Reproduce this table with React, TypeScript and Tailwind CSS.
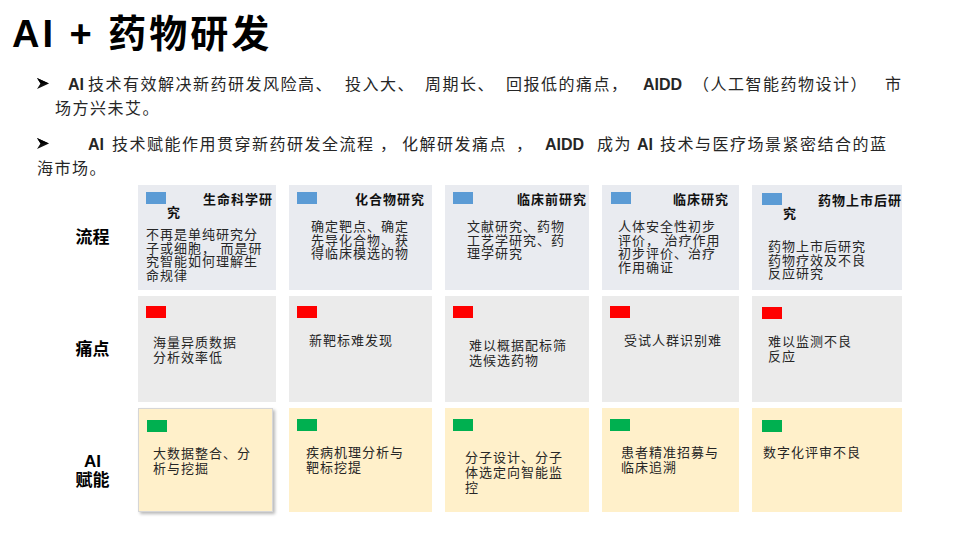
type Card = {
  title?: string[];
  indent?: string;
  head: string;
  body: string[];
  bodyPos: string;
  wide?: string;
};

type Row = {
  label: string[];
  labelPad: string;
  bg: string;
  marker: string;
  leading: string;
  cards: Card[];
};

const rows: Row[] = [
  {
    label: ["流程"],
    labelPad: "",
    bg: "bg-[#e9ebf0]",
    marker: "bg-[#5b9bd5]",
    leading: "leading-[13.5px]",
    cards: [
      {
        title: ["生命科学研", "究"],
        indent: "indent-[36px]",
        head: "pt-[7px] pl-[8px]",
        body: ["不再是单纯研究分", "子或细胞， 而是研", "究智能如何理解生", "命规律"],
        bodyPos: "pl-[8px] mt-[23px]",
      },
      {
        title: ["化合物研究"],
        indent: "indent-[37px]",
        head: "pt-[7px] pl-[8px]",
        body: ["确定靶点、确定", "先导化合物、获", "得临床模选的物"],
        bodyPos: "pl-[22px] mt-[15px]",
      },
      {
        title: ["临床前研究"],
        indent: "indent-[43px]",
        head: "pt-[7px] pl-[8px]",
        body: ["文献研究、药物", "工艺学研究、药", "理学研究"],
        bodyPos: "pl-[22px] mt-[15px]",
      },
      {
        title: ["临床研究"],
        indent: "indent-[41px]",
        head: "pt-[7px] pl-[9px]",
        body: ["人体安全性初步", "评价， 治疗作用", "初步评价、治疗", "作用确证"],
        bodyPos: "pl-[16px] mt-[15px]",
      },
      {
        title: ["药物上市后研", "究"],
        indent: "indent-[35px]",
        head: "pt-[8px] pl-[10px]",
        body: ["药物上市后研究", "药物疗效及不良", "反应研究"],
        bodyPos: "pl-[16px] mt-[35px]",
      },
    ],
  },
  {
    label: ["痛点"],
    labelPad: "",
    bg: "bg-[#ebebeb]",
    marker: "bg-[#ff0000]",
    leading: "leading-[15px]",
    cards: [
      { head: "pt-[10px] pl-[8px]", body: ["海量异质数据", "分析效率低"], bodyPos: "pl-[15px] mt-[19px]" },
      { head: "pt-[10px] pl-[8px]", body: ["新靶标难发现"], bodyPos: "pl-[20px] mt-[17px]" },
      { head: "pt-[10px] pl-[8px]", body: ["难以概据配标筛", "选候选药物"], bodyPos: "pl-[24px] mt-[22px]" },
      { head: "pt-[10px] pl-[8px]", body: ["受试人群识别难"], bodyPos: "pl-[22px] mt-[17px]" },
      { head: "pt-[11px] pl-[10px]", body: ["难以监测不良", "反应"], bodyPos: "pl-[16px] mt-[18px]" },
    ],
  },
  {
    label: ["AI", "赋能"],
    labelPad: "pt-[22px]",
    bg: "bg-[#fff0ca]",
    marker: "bg-[#00b050]",
    leading: "leading-[15px]",
    cards: [
      {
        head: "pt-[11px] pl-[8px]",
        body: ["大数据整合、分", "析与挖掘"],
        bodyPos: "pl-[14px] mt-[17px]",
        wide: "w-[135px] border border-[#d6d6d6] shadow-[2px_2px_3px_rgba(0,0,0,0.28)]",
      },
      { head: "pt-[11px] pl-[8px]", body: ["疾病机理分析与", "靶标挖提"], bodyPos: "pl-[17px] mt-[17px]" },
      { head: "pt-[11px] pl-[8px]", body: ["分子设计、分子", "体选定向智能监", "控"], bodyPos: "pl-[20px] mt-[22px]" },
      { head: "pt-[11px] pl-[8px]", body: ["患者精准招募与", "临床追溯"], bodyPos: "pl-[19px] mt-[17px]" },
      { head: "pt-[12px] pl-[10px]", body: ["数字化评审不良"], bodyPos: "pl-[11px] mt-[17px]" },
    ],
  },
];

function StepCard({ card, row }: { card: Card; row: Row }) {
  return (
    <div className={`${row.bg} ${card.wide ?? "w-full"} h-full flex flex-col`}>
      <div className={`flex h-[20px] items-start ${card.head}`}>
        <div className={`${row.marker} w-[20px] h-[12px] shrink-0`} />
        {card.title && (
          <div
            className={`ml-[1px] pt-[1px] text-[13px] tracking-[1px] leading-[13px] font-bold text-[#111] whitespace-nowrap ${card.indent}`}
          >
            {card.title.map((t, i) => (
              <div key={i} className={i > 0 ? "indent-0" : ""}>
                {t}
              </div>
            ))}
          </div>
        )}
      </div>
      <div className={`text-[13px] tracking-[1px] ${row.leading} text-[#262626] ${card.bodyPos}`}>
        {card.body.map((line, i) => (
          <div key={i} className="whitespace-nowrap">
            {line}
          </div>
        ))}
      </div>
    </div>
  );
}

function Arrow() {
  return (
    <svg width="12" height="11" viewBox="0 0 12 11" className="mt-[-3px]">
      <polygon points="0,0 12,5.5 0,11 3.5,5.5" fill="#111" />
      <polygon points="0,0 12,5.5 3.5,5.5" fill="#000" />
    </svg>
  );
}

const cjk = "tracking-[1.5px]";

export default function App() {
  return (
    <div className="w-[960px] h-[540px] bg-white overflow-hidden font-['Liberation_Sans','Noto_Sans_CJK_SC',sans-serif] text-[#1a1a1a]">
      <h1 className="pl-[12px] pt-[10px] text-[38px] leading-[48px] font-bold tracking-[3px] text-black">
        AI + 药物研发
      </h1>

      <div className="mt-[15px] text-[16px] leading-[24px] text-[#262626]">
        <div className="flex pl-[37px] whitespace-nowrap">
          <span className="w-[31px] shrink-0 flex items-center">
            <Arrow />
          </span>
          <span className="w-[20px] shrink-0 font-bold">AI</span>
          <span className={`w-[257px] shrink-0 ${cjk}`}>技术有效解决新药研发风险高、</span>
          <span className={`w-[80px] shrink-0 ${cjk}`}>投入大、</span>
          <span className={`w-[81px] shrink-0 ${cjk}`}>周期长、</span>
          <span className={`w-[137px] shrink-0 ${cjk}`}>回报低的痛点，</span>
          <span className="w-[50px] shrink-0 font-bold">AIDD</span>
          <span className={`w-[192px] shrink-0 ${cjk}`}>（人工智能药物设计）</span>
          <span className={`shrink-0 ${cjk}`}>市</span>
        </div>
        <div className={`pl-[55px] ${cjk}`}>场方兴未艾。</div>

        <div className="mt-[12px] flex pl-[37px] whitespace-nowrap">
          <span className="w-[51px] shrink-0 flex items-center">
            <Arrow />
          </span>
          <span className="w-[24px] shrink-0 font-bold">AI</span>
          <span className={`w-[268px] shrink-0 ${cjk}`}>技术赋能作用贯穿新药研发全流程</span>
          <span className="w-[22px] shrink-0">，</span>
          <span className={`w-[114px] shrink-0 ${cjk}`}>化解研发痛点</span>
          <span className="w-[29px] shrink-0">，</span>
          <span className="w-[52px] shrink-0 font-bold">AIDD</span>
          <span className={`w-[40px] shrink-0 ${cjk}`}>成为</span>
          <span className="w-[23px] shrink-0 font-bold">AI</span>
          <span className={`shrink-0 ${cjk}`}>技术与医疗场景紧密结合的蓝</span>
        </div>
        <div className={`pl-[37px] ${cjk}`}>海市场。</div>
      </div>

      <div className="mt-[4px] pl-[60px] grid grid-cols-[65px_138px_143px_144px_137px_150px] grid-rows-[105px_106px_104px] gap-x-[13px] gap-y-[6px]">
        {rows.map((row, r) => (
          <div key={r} className="contents">
            <div
              className={`flex flex-col items-center justify-center ${row.labelPad} text-[17px] leading-[19px] font-bold text-black`}
            >
              {row.label.map((l) => (
                <div key={l}>{l}</div>
              ))}
            </div>
            {row.cards.map((card, c) => (
              <StepCard key={c} card={card} row={row} />
            ))}
          </div>
        ))}
      </div>
    </div>
  );
}
